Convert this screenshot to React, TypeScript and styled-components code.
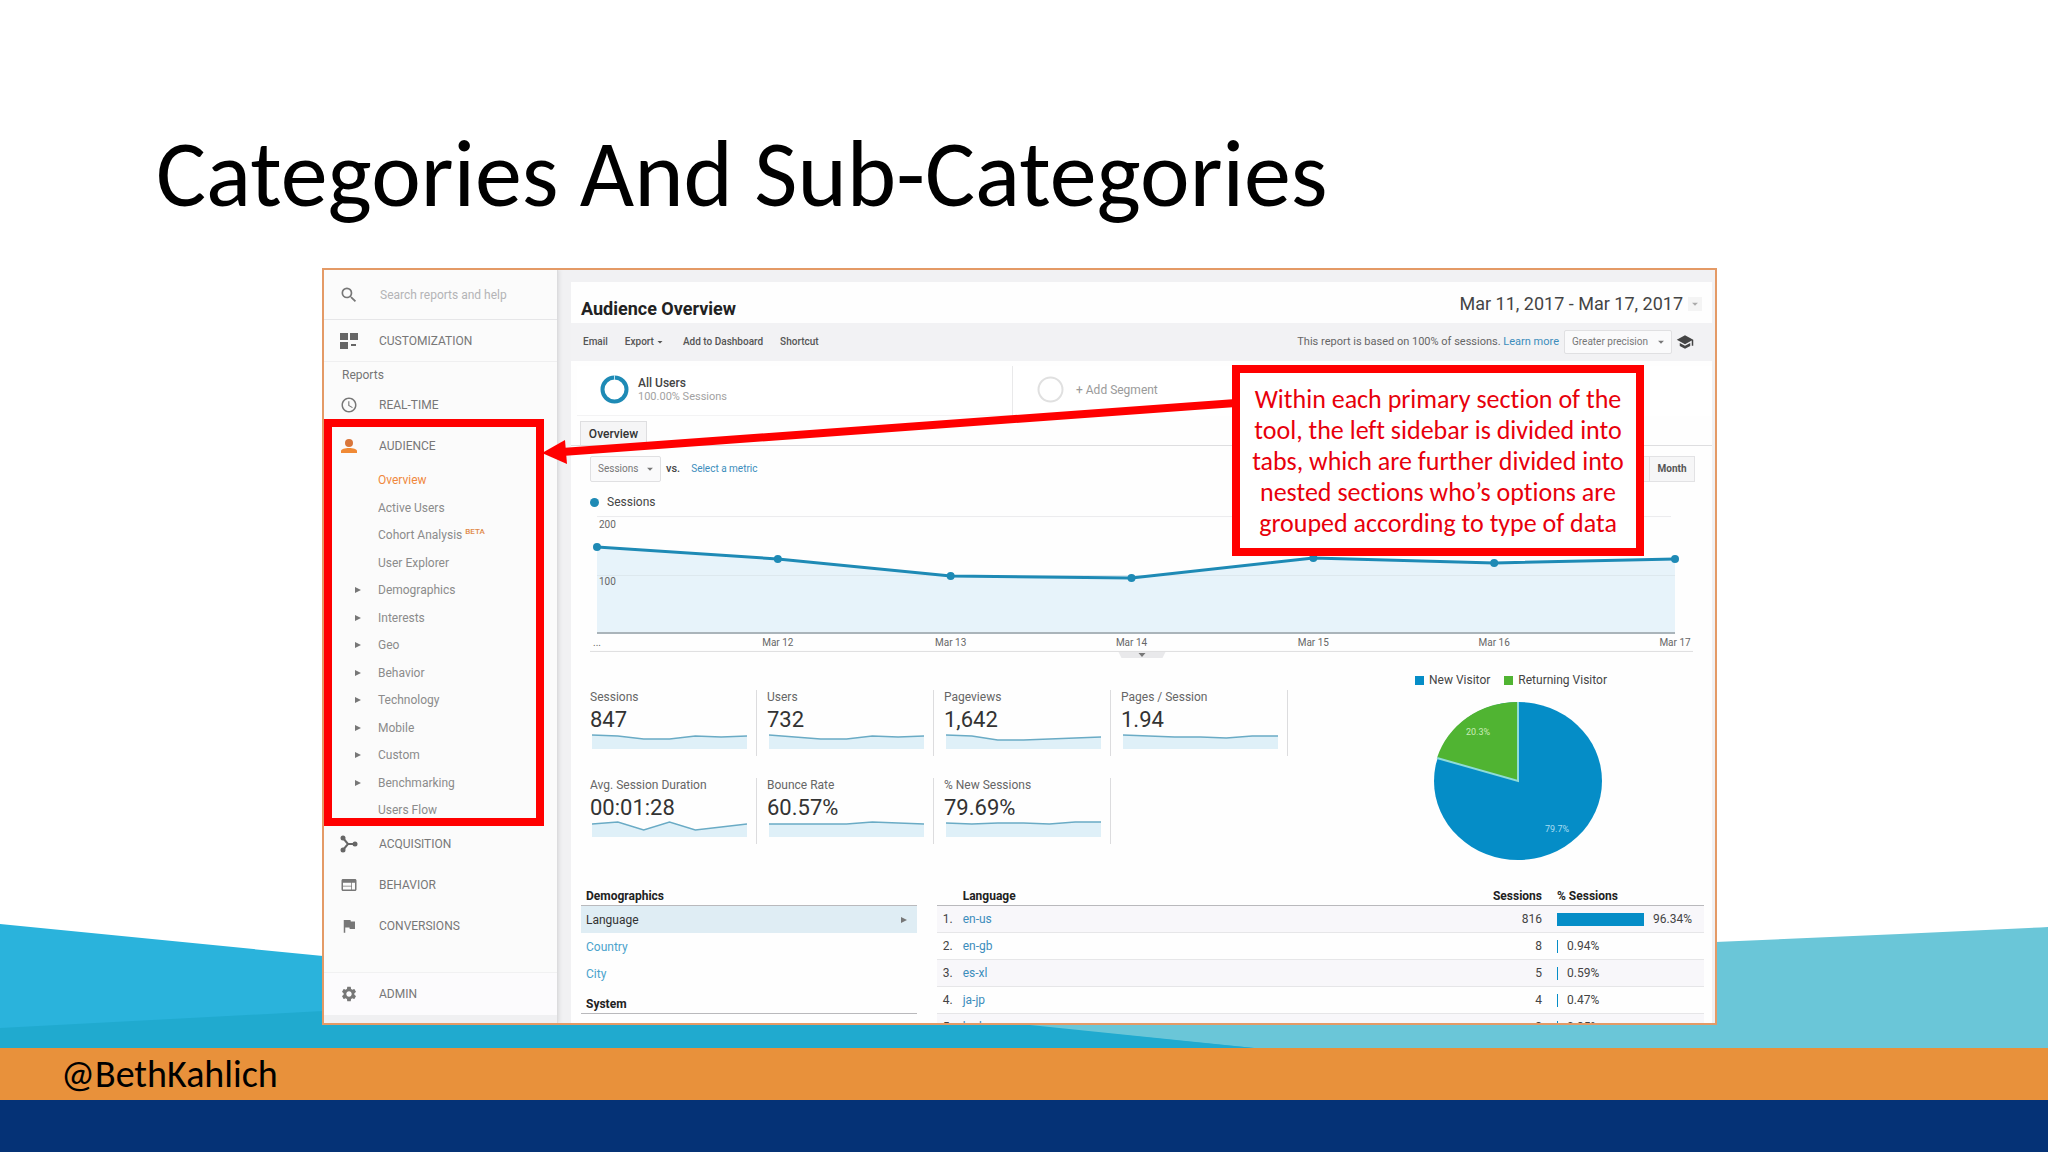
import React from "react";
import styled, { createGlobalStyle } from "styled-components";
import { MdSearch, MdAccessTime, MdWeb, MdFlag, MdSettings, MdSchool, MdArrowDropDown } from "react-icons/md";

const slideFont = `Carlito, Lato, "Open Sans", sans-serif`;
const uiFont = `Roboto, "Liberation Sans", sans-serif`;

const GlobalStyle = createGlobalStyle`
  *, *::before, *::after { box-sizing: border-box; }
  body { margin: 0; background: #fff; }
  h1, h2, h3, p, ul { margin: 0; padding: 0; }
  ul { list-style: none; }
  a { text-decoration: none; color: inherit; }
  button, select, input { font: inherit; color: inherit; margin: 0; }
  svg { display: block; flex: none; }
`;

/* ---------- slide ---------- */

const Slide = styled.main`
  position: relative;
  isolation: isolate;
  height: 100vh;
  min-height: 720px;
  display: grid;
  grid-template-rows: 268px minmax(0, 1fr) 23px 52px 52px;
  overflow: hidden;
  font-family: ${slideFont};
  font-variant-ligatures: none;
  color: #000;
`;

const SlideTitle = styled.h1`
  padding: 124px 156px 0;
  font-size: 94px;
  line-height: 100px;
  font-weight: 400;
  white-space: nowrap;
`;

const Waves = styled.svg`
  position: absolute;
  z-index: -1;
  left: 0;
  bottom: 104px;
  width: 100%;
  height: 130px;
`;

const Handle = styled.footer`
  grid-row: 4;
  display: flex;
  align-items: center;
  padding: 0 61px;
  background: #e8913b;
  font-size: 38px;
  line-height: 40px;
`;

const NavyBar = styled.div`
  grid-row: 5;
  background: #053276;
`;

const Frame = styled.section`
  position: relative;
  display: flex;
  margin: 0 331px 0 322px;
  border: 2px solid #e49a66;
  background: #f1f1f3;
  overflow: hidden;
  font-family: ${uiFont};
  font-size: 12px;
  line-height: 16px;
  color: #444;
`;

/* ---------- sidebar ---------- */

const Sidebar = styled.aside`
  flex: none;
  width: 234px;
  display: flex;
  flex-direction: column;
  background: #fbfbfb;
  border-right: 1px solid #dcdcde;
  box-shadow: 1px 0 4px #d8d8da;
  color: #777;
`;

const SearchBar = styled.label`
  display: flex;
  align-items: center;
  gap: 21px;
  height: 50px;
  padding: 0 16px 0 15px;
  border-bottom: 1px solid #e6e6e8;
`;

const SearchInput = styled.input`
  width: 100%;
  min-width: 0;
  padding: 0;
  border: 0;
  outline: 0;
  background: transparent;
  font-size: 12px;
  &::placeholder { color: #b4b4b6; opacity: 1; }
`;

const TopGroup = styled.div`
  display: flex;
  align-items: center;
  height: 42px;
  border-bottom: 1px solid #efeff0;
`;

const NavRow = styled.a<{ $inset?: boolean }>`
  display: flex;
  align-items: center;
  gap: 21px;
  height: 28px;
  padding-left: ${(p) => (p.$inset ? 8 : 16)}px;
  font-size: 12px;
`;

const ReportsLabel = styled.p`
  padding: 5px 18px 8px;
  color: #757575;
`;

const OpenSection = styled.div`
  width: 220px;
  border: 8px solid #f00;
  padding-top: 5px;
`;

const SubList = styled.ul`
  display: grid;
  align-content: space-between;
  height: 346px;
  margin-top: 12px;
  color: #8b8b8b;
`;

const SubItem = styled.li`
  display: grid;
  grid-template-columns: 23px 1fr;
  padding-left: 23px;
  align-items: center;
`;

const SubLink = styled.a<{ $active?: boolean }>`
  color: ${(p) => (p.$active ? "#f0883c" : "inherit")};
`;

const Beta = styled.sup`
  margin-left: 3px;
  font-size: 8px;
  line-height: 0;
  font-weight: 500;
  color: #e08a4a;
`;

const LowerGroup = styled.div`
  display: grid;
  gap: 13px;
  padding-top: 4px;
`;

const AdminGroup = styled.div`
  display: flex;
  align-items: center;
  height: 43px;
  margin: auto 0 8px;
  background: #fcfbfd;
  border-top: 1px solid #f1f1f2;
  box-shadow: 0 8px 0 #f0f0f2;
`;

/* ---------- report ---------- */

const Report = styled.div`
  flex: 1;
  min-width: 0;
  display: flex;
  flex-direction: column;
  margin: 12px 3px 0 13px;
  background: #fefefe;
`;

const ReportHeader = styled.header`
  flex: none;
  display: flex;
  justify-content: space-between;
  align-items: center;
  height: 41px;
  padding: 0 10px;
`;

const ReportTitle = styled.h2`
  padding-top: 12px;
  font-size: 18px;
  line-height: 20px;
  font-weight: 700;
  color: #222;
`;

const DateButton = styled.button`
  display: flex;
  align-items: center;
  gap: 5px;
  padding: 2px 0 0;
  border: 0;
  background: none;
  font-size: 18px;
  line-height: 20px;
  svg { color: #aaa; background: #f4f4f4; }
`;

const Toolbar = styled.div`
  flex: none;
  display: flex;
  align-items: center;
  height: 38px;
  padding: 0 18px 0 12px;
  background: #f2f2f4;
  font-size: 10px;
`;

const ToolButton = styled.button`
  display: flex;
  align-items: center;
  padding: 0;
  margin-right: 17px;
  border: 0;
  background: none;
  font-weight: 500;
  color: #555;
`;

const Sampling = styled.p`
  margin-left: auto;
  margin-right: 5px;
  font-size: 11px;
  color: #666;
`;

const TextLink = styled.a`
  color: #3c8dbc;
`;

const SelectBox = styled.span<{ $width: number; $height: number }>`
  position: relative;
  display: inline-flex;
  width: ${(p) => p.$width}px;
  height: ${(p) => p.$height}px;
  font-size: 10px;
  color: #777;
  svg {
    position: absolute;
    right: 4px;
    top: 50%;
    margin-top: -7px;
    pointer-events: none;
  }
`;

const Select = styled.select`
  appearance: none;
  width: 100%;
  padding: 0 7px;
  border: 1px solid #e0e0e2;
  border-radius: 2px;
  background: #fafafb;
`;

const HatButton = styled.button`
  display: flex;
  padding: 0;
  margin-left: 4px;
  border: 0;
  background: none;
  color: #444;
`;

const Segments = styled.div`
  flex: none;
  display: grid;
  grid-template-columns: 436fr 699fr;
  height: 60px;
  padding: 5px 0 5px 6px;
`;

const Segment = styled.button<{ $empty?: boolean }>`
  display: flex;
  align-items: center;
  gap: ${(p) => (p.$empty ? 11 : 9)}px;
  padding: 0 23px 2px;
  border: 0;
  border-right: 1px solid ${(p) => (p.$empty ? "transparent" : "#e9e9ea")};
  border-bottom: 1px solid ${(p) => (p.$empty ? "transparent" : "#f3f3f4")};
  background: #fff;
  text-align: left;
  color: ${(p) => (p.$empty ? "#9a9a9a" : "#444")};
`;

const SegmentText = styled.span`
  display: grid;
  font-weight: 500;
  line-height: 14px;
`;

const SegmentNote = styled.small`
  font-size: 11px;
  font-weight: 400;
  color: #a2a2a2;
`;

const Tabs = styled.div`
  flex: none;
  display: flex;
  height: 25px;
  padding-left: 9px;
  border-bottom: 1px solid #dedee0;
`;

const Tab = styled.button`
  width: 67px;
  padding: 0;
  border: 1px solid #dedee0;
  border-bottom: 0;
  background: #f5f5f6;
  font-size: 12px;
  font-weight: 500;
  color: #333;
`;

const Controls = styled.div`
  flex: none;
  display: flex;
  align-items: center;
  height: 26px;
  margin-top: 10px;
  padding: 0 17px 0 19px;
  font-size: 10px;
`;

const Versus = styled.span`
  margin: 0 11px 0 5px;
  font-size: 11px;
  font-weight: 500;
`;

const Periods = styled.div`
  display: flex;
  margin-left: auto;
`;

const PeriodButton = styled.button`
  width: 46px;
  height: 26px;
  padding: 0;
  margin-left: -1px;
  border: 1px solid #e2e2e4;
  background: #f6f6f7;
  font-weight: 700;
  color: #555;
`;

const ChartLegend = styled.p`
  flex: none;
  display: flex;
  align-items: center;
  gap: 8px;
  height: 28px;
  padding: 12px 0 0 19px;
`;

const Dot = styled.i`
  width: 9px;
  height: 9px;
  border-radius: 50%;
  background: #1e8ab5;
`;

const LineChart = styled.svg`
  margin-left: 19px;
  width: calc(100% - 38px);
  height: 150px;
  font-size: 10px;
  fill: #666;
`;

const Overview = styled.div`
  flex: none;
  display: grid;
  grid-template-columns: 708px 1fr;
  height: 190px;
  margin: 12px 0 0 9px;
`;

const Metrics = styled.div`
  display: grid;
  grid-template-columns: repeat(4, 177px);
  grid-auto-rows: 66px;
  row-gap: 22px;
  padding-top: 18px;
`;

const Metric = styled.div`
  display: flex;
  flex-direction: column;
  padding: 0 10px;
  border-right: 1px solid #dcdcde;
`;

const MetricLabel = styled.span`
  font-size: 12px;
  line-height: 14px;
  white-space: nowrap;
  color: #666;
`;

const MetricValue = styled.span`
  margin: 4px 0 1px;
  font-size: 22px;
  line-height: 24px;
  color: #333;
`;

const SparkSvg = styled.svg`
  width: 155px;
  height: 16px;
  margin-left: 2px;
`;

const PiePanel = styled.div`
  display: flex;
  flex-direction: column;
  align-items: center;
  gap: 13px;
  padding-left: 22px;
`;

const PieLegend = styled.div`
  display: flex;
  gap: 14px;
`;

const PieKey = styled.span<{ $color: string }>`
  display: flex;
  align-items: center;
  gap: 5px;
  &::before {
    content: "";
    width: 9px;
    height: 9px;
    background: ${(p) => p.$color};
  }
`;

const Tables = styled.div`
  flex: none;
  display: grid;
  grid-template-columns: 7fr 16fr;
  align-items: start;
  gap: 20px;
  margin-top: 17px;
  padding: 0 8px 0 10px;
`;

const DimensionHeading = styled.h3`
  height: 27px;
  padding: 10px 5px 0;
  border-bottom: 1px solid #b9b9bc;
  font-size: 12px;
  line-height: 14px;
  font-weight: 700;
  color: #222;
`;

const Dimension = styled.a<{ $selected?: boolean }>`
  display: flex;
  align-items: center;
  justify-content: space-between;
  height: 27px;
  padding: 0 10px 0 5px;
  font-size: 12px;
  background: ${(p) => (p.$selected ? "#dfedf4" : "transparent")};
  color: ${(p) => (p.$selected ? "#333" : "#4ba3cc")};
`;

const DataTable = styled.table`
  width: 100%;
  border-collapse: separate;
  border-spacing: 0;
  table-layout: fixed;
  font-size: 12px;
  line-height: 14px;
`;

const HeadCell = styled.th<{ $right?: boolean }>`
  height: 27px;
  padding: 8px 0 0;
  text-align: ${(p) => (p.$right ? "right" : "left")};
  border-bottom: 1px solid #b9b9bc;
  font-weight: 700;
  color: #222;
`;

const DataRow = styled.tr`
  &:nth-child(odd) { background: #f8f7fa; }
`;

const Cell = styled.td<{ $right?: boolean; $pad?: number }>`
  height: 27px;
  padding: 0 0 0 ${(p) => p.$pad || 0}px;
  text-align: ${(p) => (p.$right ? "right" : "left")};
  border-bottom: 1px solid #e6e6e8;
`;

const Share = styled.span`
  display: flex;
  align-items: center;
  gap: 9px;
`;

const ShareBar = styled.i`
  height: 13px;
  min-width: 1px;
  background: #058dc7;
`;

/* ---------- annotation ---------- */

const Arrow = styled.svg`
  position: absolute;
  left: 218px;
  top: 125px;
  width: calc(100% - 697px);
  height: 75px;
`;

const Callout = styled.p`
  position: absolute;
  top: 95px;
  right: 71px;
  width: 412px;
  height: 191px;
  padding: 11px 0;
  border: 8px solid #f00;
  background: #fff;
  font-family: ${slideFont};
  font-size: 26px;
  line-height: 31px;
  text-align: center;
  white-space: pre-line;
  color: #e8000b;
`;

/* ---------- icons ---------- */

const TilesIcon = () => (
  <svg width="18" height="18" viewBox="0 0 18 18" fill="#666">
    <path d="M0 1h8v7H0zM10 1h8v7h-8zM0 10h8v7H0zM11 12h5v2h-5z" />
  </svg>
);

const PersonIcon = () => (
  <svg width="18" height="18" viewBox="0 0 18 18">
    <circle cx="9" cy="6" r="4" fill="#d9763a" />
    <path d="M1 16v-2c0-2 4-3 8-3s8 1 8 3v2z" fill="#f08a35" />
  </svg>
);

const MergeIcon = () => (
  <svg width="18" height="18" viewBox="0 0 18 18" fill="#666" stroke="#666">
    <path d="M3 3l5 6-5 6M8 9h7" fill="none" strokeWidth="2" />
    <circle cx="3" cy="3" r="2.500" stroke="none" />
    <circle cx="3" cy="15" r="2.500" stroke="none" />
    <circle cx="15" cy="9" r="2.500" stroke="none" />
  </svg>
);

const Triangle = () => (
  <svg width="6" height="8" viewBox="0 0 6 8" fill="#777">
    <path d="M0 1l6 3-6 3z" />
  </svg>
);

const Ring = ({ color, width }: { color: string; width: number }) => (
  <svg width="29" height="29" viewBox="0 0 29 29" fill="none" stroke={color} strokeWidth={width}>
    <circle cx="14.5" cy="14.5" r="12" />
    {width > 2 && <path d="M14.5 0v5" stroke="#bfe3f2" strokeWidth="1" />}
  </svg>
);

/* ---------- data ---------- */

const subItems: { label: string; nested?: boolean; active?: boolean; beta?: boolean }[] = [
  { label: "Overview", active: true },
  { label: "Active Users" },
  { label: "Cohort Analysis", beta: true },
  { label: "User Explorer" },
  { label: "Demographics", nested: true },
  { label: "Interests", nested: true },
  { label: "Geo", nested: true },
  { label: "Behavior", nested: true },
  { label: "Technology", nested: true },
  { label: "Mobile", nested: true },
  { label: "Custom", nested: true },
  { label: "Benchmarking", nested: true },
  { label: "Users Flow" },
];

const metrics = [
  { label: "Sessions", value: "847", line: [2, 3, 6, 6, 3, 4, 3] },
  { label: "Users", value: "732", line: [2, 4, 6, 6, 3, 4, 3] },
  { label: "Pageviews", value: "1,642", line: [2, 3, 7, 7, 6, 5, 4] },
  { label: "Pages / Session", value: "1.94", line: [2, 3, 4, 4, 5, 3, 3] },
  { label: "Avg. Session Duration", value: "00:01:28", line: [3, 1, 9, 1, 9, 6, 3] },
  { label: "Bounce Rate", value: "60.57%", line: [3, 3, 3, 3, 1, 2, 3] },
  { label: "% New Sessions", value: "79.69%", line: [2, 3, 2, 2, 3, 1, 1] },
];

const languages = [
  { name: "en-us", sessions: 816, share: 96.34 },
  { name: "en-gb", sessions: 8, share: 0.94 },
  { name: "es-xl", sessions: 5, share: 0.59 },
  { name: "ja-jp", sessions: 4, share: 0.47 },
  { name: "ko-kr", sessions: 3, share: 0.35 },
];

const chartPoints = [
  { x: 7, y: 37, day: "..." },
  { x: 188, y: 49, day: "Mar 12" },
  { x: 361, y: 66, day: "Mar 13" },
  { x: 542, y: 68, day: "Mar 14" },
  { x: 724, y: 48, day: "Mar 15" },
  { x: 905, y: 53, day: "Mar 16" },
  { x: 1086, y: 49, day: "Mar 17" },
];

const Spark = ({ line }: { line: number[] }) => {
  const pts = line.map((y, i) => `${(i * 155) / 6},${y}`).join(" ");
  return (
    <SparkSvg viewBox="0 0 155 16" preserveAspectRatio="none">
      <polygon points={`0,16 ${pts} 155,16`} fill="#dff0f8" />
      <polyline points={pts} fill="none" stroke="#6aabc5" strokeWidth="1.5" />
    </SparkSvg>
  );
};

const SessionsChart = () => {
  const pts = chartPoints.map((p) => `${p.x},${p.y}`).join(" ");
  return (
    <LineChart viewBox="0 0 1104 150" role="img" aria-label="Sessions by day">
      <path d="M7 6.500H1082" stroke="#ececee" />
      <polygon points={`7,123 ${pts} 1086,123`} fill="#e7f3fa" />
      <path d="M7 65.500H1086" stroke="#dde8ee" />
      <path d="M7 123H1086" stroke="#aab4ba" strokeWidth="2" />
      <polyline points={pts} fill="none" stroke="#1e8ab5" strokeWidth="3" />
      {chartPoints.map((p) => (
        <g key={p.day}>
          <circle cx={p.x} cy={p.y} r="4" fill="#1e8ab5" />
          <text x={p.x} y="136" textAnchor="middle">{p.day}</text>
        </g>
      ))}
      <text x="9" y="18">200</text>
      <text x="9" y="75">100</text>
      <path d="M0 141.500H1104" stroke="#dedee0" />
      <path d="M529 142h47l-3 6h-41z" fill="#e9e9eb" />
      <path d="M549 143h7l-3.500 4z" fill="#777" />
    </LineChart>
  );
};

const VisitorPie = () => (
  <svg width="184" height="160" viewBox="0 0 184 160" fontSize="9" fill="#fff" textAnchor="middle">
    <ellipse cx="99" cy="80" rx="84" ry="79" fill="#058dc7" />
    <path d="M99 80L18 57A84 79 0 0 1 99 1z" fill="#50b432" />
    <path d="M99 1V80L18 57" fill="none" stroke="#8fdcd8" strokeWidth="2" />
    <text x="59" y="34" fill="#c9ecb9">20.3%</text>
    <text x="138" y="131" fill="#a8dcf2">79.7%</text>
  </svg>
);

export default function App() {
  return (
    <Slide>
      <GlobalStyle />
      <Waves viewBox="0 0 2048 130" preserveAspectRatio="none" aria-hidden="true">
        <path d="M700 130V60Q1400 40 2048 9V130z" fill="#6ac6d8" />
        <path d="M0 6L323 38L1254 130H0z" fill="#2ab3dc" />
        <path d="M0 110L323 93Q700 75 1030 107L1254 130H0z" fill="#20aacf" />
      </Waves>
      <SlideTitle>Categories And Sub-Categories</SlideTitle>

      <Frame>
        <Sidebar>
          <SearchBar>
            <MdSearch size={20} />
            <SearchInput type="search" placeholder="Search reports and help" aria-label="Search reports and help" />
          </SearchBar>
          <TopGroup>
            <NavRow href="#customization"><TilesIcon />CUSTOMIZATION</NavRow>
          </TopGroup>
          <ReportsLabel>Reports</ReportsLabel>
          <NavRow href="#realtime"><MdAccessTime size={18} />REAL-TIME</NavRow>
          <OpenSection>
            <NavRow href="#audience" $inset><PersonIcon />AUDIENCE</NavRow>
            <SubList>
              {subItems.map((s) => (
                <SubItem key={s.label}>
                  <span>{s.nested && <Triangle />}</span>
                  <SubLink href="#report" $active={s.active}>
                    {s.label}
                    {s.beta && <Beta>BETA</Beta>}
                  </SubLink>
                </SubItem>
              ))}
            </SubList>
          </OpenSection>
          <LowerGroup>
            <NavRow href="#acquisition"><MergeIcon />ACQUISITION</NavRow>
            <NavRow href="#behavior"><MdWeb size={18} />BEHAVIOR</NavRow>
            <NavRow href="#conversions"><MdFlag size={18} />CONVERSIONS</NavRow>
          </LowerGroup>
          <AdminGroup>
            <NavRow href="#admin"><MdSettings size={18} />ADMIN</NavRow>
          </AdminGroup>
        </Sidebar>

        <Report>
          <ReportHeader>
            <ReportTitle>Audience Overview</ReportTitle>
            <DateButton>Mar 11, 2017 - Mar 17, 2017<MdArrowDropDown size={14} /></DateButton>
          </ReportHeader>
          <Toolbar>
            <ToolButton>Email</ToolButton>
            <ToolButton>Export<MdArrowDropDown size={12} /></ToolButton>
            <ToolButton>Add to Dashboard</ToolButton>
            <ToolButton>Shortcut</ToolButton>
            <Sampling>
              This report is based on 100% of sessions. <TextLink href="#more">Learn more</TextLink>
            </Sampling>
            <SelectBox $width={108} $height={24}>
              <Select aria-label="Precision"><option>Greater precision</option></Select>
              <MdArrowDropDown size={14} />
            </SelectBox>
            <HatButton aria-label="Education"><MdSchool size={18} /></HatButton>
          </Toolbar>

          <Segments>
            <Segment>
              <Ring color="#1e8ab5" width={4} />
              <SegmentText>All Users<SegmentNote>100.00% Sessions</SegmentNote></SegmentText>
            </Segment>
            <Segment $empty><Ring color="#e0e0e0" width={2} />+ Add Segment</Segment>
          </Segments>
          <Tabs><Tab>Overview</Tab></Tabs>
          <Controls>
            <SelectBox $width={71} $height={26}>
              <Select aria-label="Metric"><option>Sessions</option></Select>
              <MdArrowDropDown size={14} />
            </SelectBox>
            <Versus>vs.</Versus>
            <TextLink href="#metric">Select a metric</TextLink>
            <Periods>
              <PeriodButton>Week</PeriodButton>
              <PeriodButton>Month</PeriodButton>
            </Periods>
          </Controls>
          <ChartLegend><Dot />Sessions</ChartLegend>
          <SessionsChart />

          <Overview>
            <Metrics>
              {metrics.map((m) => (
                <Metric key={m.label}>
                  <MetricLabel>{m.label}</MetricLabel>
                  <MetricValue>{m.value}</MetricValue>
                  <Spark line={m.line} />
                </Metric>
              ))}
            </Metrics>
            <PiePanel>
              <PieLegend>
                <PieKey $color="#058dc7">New Visitor</PieKey>
                <PieKey $color="#50b432">Returning Visitor</PieKey>
              </PieLegend>
              <VisitorPie />
            </PiePanel>
          </Overview>

          <Tables>
            <nav aria-label="Dimensions">
              <DimensionHeading>Demographics</DimensionHeading>
              <Dimension href="#language" $selected>Language<Triangle /></Dimension>
              <Dimension href="#country">Country</Dimension>
              <Dimension href="#city">City</Dimension>
              <DimensionHeading>System</DimensionHeading>
              <Dimension href="#browser">Browser</Dimension>
            </nav>
            <DataTable>
              <colgroup>
                <col style={{ width: 26 }} />
                <col />
                <col style={{ width: 100 }} />
                <col style={{ width: 162 }} />
              </colgroup>
              <thead>
                <tr>
                  <HeadCell />
                  <HeadCell>Language</HeadCell>
                  <HeadCell $right>Sessions</HeadCell>
                  <HeadCell><Share style={{ paddingLeft: 15 }}>% Sessions</Share></HeadCell>
                </tr>
              </thead>
              <tbody>
                {languages.map((l, i) => (
                  <DataRow key={l.name}>
                    <Cell $pad={6}>{i + 1}.</Cell>
                    <Cell><TextLink href="#lang">{l.name}</TextLink></Cell>
                    <Cell $right>{l.sessions}</Cell>
                    <Cell $pad={15}>
                      <Share>
                        <ShareBar style={{ width: Math.round(l.share * 0.9) }} />
                        {l.share.toFixed(2)}%
                      </Share>
                    </Cell>
                  </DataRow>
                ))}
              </tbody>
            </DataTable>
          </Tables>
        </Report>

        <Arrow viewBox="0 0 694 75" preserveAspectRatio="none" aria-hidden="true">
          <path d="M20 57L694 8" stroke="#f00" strokeWidth="8" />
          <path d="M0 58L23 45L25 69z" fill="#f00" />
        </Arrow>
        <Callout>
          {`Within each primary section of the
          tool, the left sidebar is divided into
          tabs, which are further divided into
          nested sections who’s options are
          grouped according to type of data`}
        </Callout>
      </Frame>

      <Handle>@BethKahlich</Handle>
      <NavyBar />
    </Slide>
  );
}
